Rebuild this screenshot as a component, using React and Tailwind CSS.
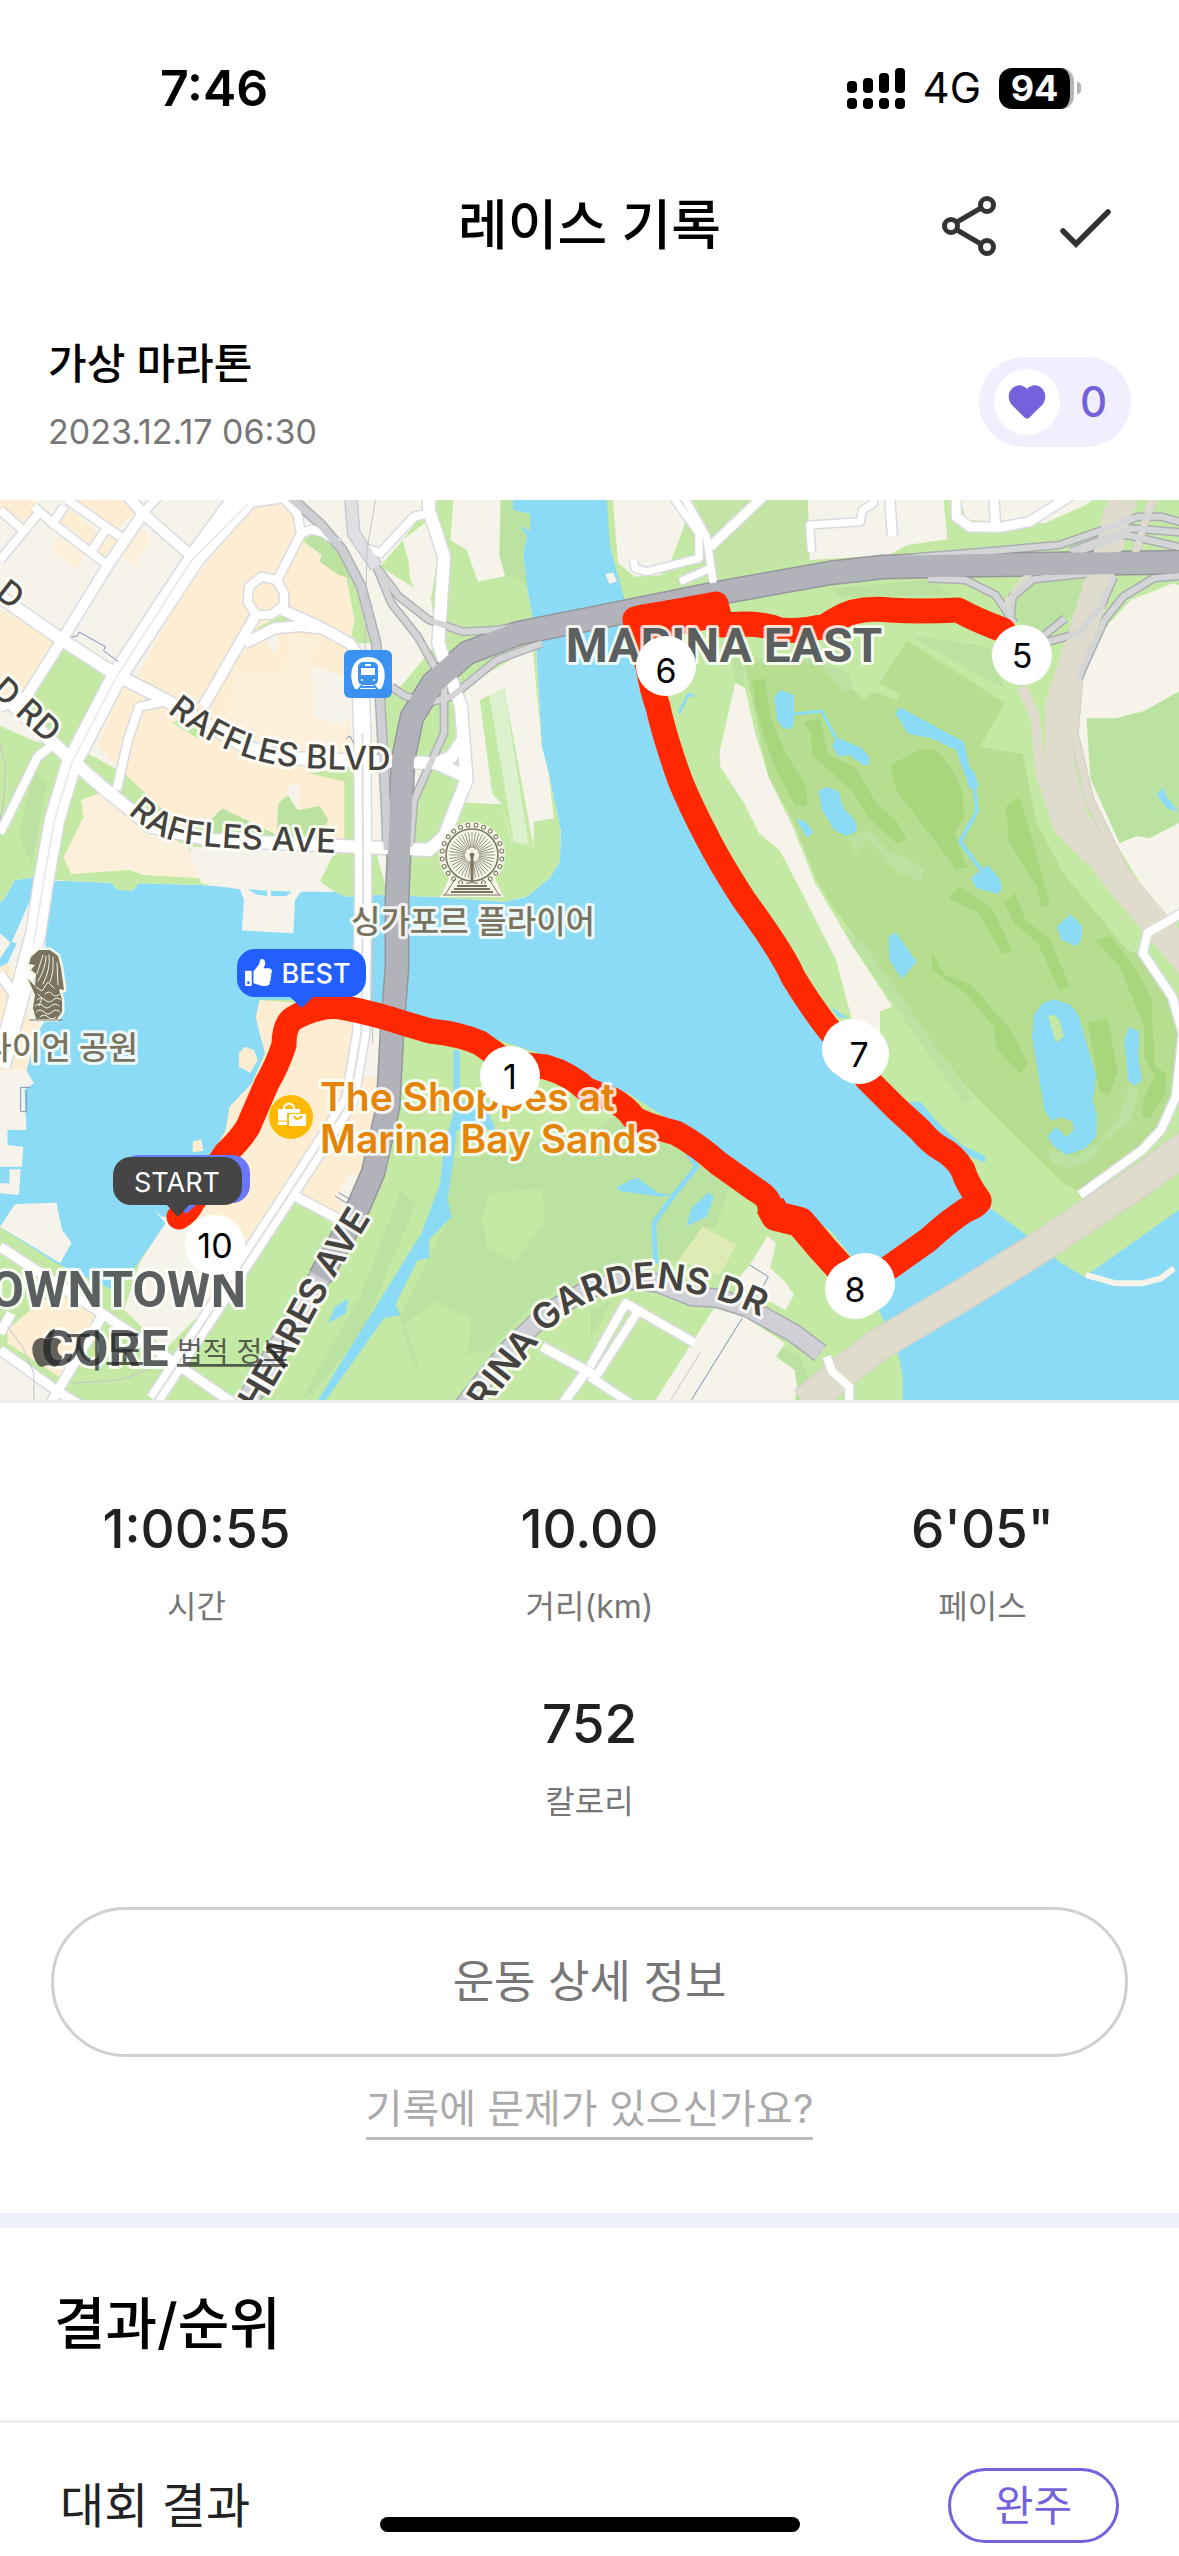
import { FaThumbsUp } from 'react-icons/fa';

const stats = [
  { value: '1:00:55', label: '시간' },
  { value: '10.00', label: '거리(km)' },
  { value: '6\'05"', label: '페이스' },
  { value: '752', label: '칼로리' },
];

// The map is split in four tiles, each with its own grid
const TILES = {
  nw: 'scale(.3763 .3333)',
  ne: 'translate(590 0) scale(.3756 .3333)',
  sw: 'translate(0 400) scale(.3763 .3333)',
  se: 'translate(590 400) scale(.3756 .3333)',
};

const WATER = '#8bdbf6';
const LAND = '#f6f4ea';
const GREEN = '#c4e9a5';
const PARK = '#bbe2a0';
const GOLF = '#b6dd90';
const ROUGH = '#a8d67d';
const BLOCK = '#fdeed3';
const SAND = '#e0dccd';

const areas = [
  // north west
  ['nw', LAND, 'M0-10H1362V30L1408 42V92L1380 75L1400 110L1390 160L1400 260L1415 350L1425 450L1440 740L1460 830L1490 990L1488 1085L1460 1135L1400 1190L1340 1205L1150 1190L1000 1185L920 1190L890 1175H800L784 1200L780 1300L643 1292L648 1200L638 1168L590 1160L535 1155L370 1150L350 1172L310 1168L296 1148L180 1143H140L85 1133L40 1140L10 1200L0 1205Z'],
  ['nw', GREEN, 'M1150 0H1362V30L1408 42V92L1380 75L1400 110L1390 160L1400 260L1415 350L1425 450L1440 740L1460 830L1490 990L1488 1085L1460 1135L1400 1190L1340 1205L1150 1190L1000 1185L920 1190L890 1175L850 1145L880 1075L915 1040H1020L1010 560L1050 580L1160 430L1145 295L1010 200L1070 120Z'],
  ['nw', PARK, 'M1330 0H1362V30L1408 42V92L1380 75L1400 110L1390 160L1400 260L1380 238L1342 228L1327 165Z'],
  ['nw', LAND, 'M1205 0H1330L1327 165L1342 228L1270 245L1240 150L1197 120Z'],
  ['nw', LAND, 'M1070 120L1140 60L1165 160L1145 298H1115L1090 240L1085 180Z'],
  ['nw', LAND, 'M1235 560L1415 440L1440 740L1458 820L1472 955L1418 965V1042L1360 1028L1333 913L1240 908Z'],
  ['nw', GREEN, 'M1275 600L1340 565L1418 1042L1362 1028L1333 913L1308 880Z'],
  ['nw', '#dcf2cf', 'M1300 585L1340 568L1405 1035L1365 1025Z'],
  ['nw', LAND, 'M1008 800H1050L1030 1180L1000 1060Z'],
  ['nw', LAND, 'M1090 800L1140 800L1100 900Z'],
  ['nw', GREEN, 'M168 440L305 525L205 770L120 740L60 605Z'],
  ['nw', GREEN, 'M0 678L95 725L200 740L330 820L440 900L500 960L560 1000V1155L370 1150L350 1172L310 1168L296 1148L180 1143L85 1133L40 1140L10 1200L0 1205Z'],
  ['nw', PARK, 'M90 810L125 850L85 1090L50 1010Z'],
  ['nw', '#fdf0da', 'M215 900L300 865L400 980L500 1040L535 1135L380 1125L345 1110L190 1122L168 1075L222 950Z'],
  ['nw', GREEN, 'M480 305L362 530L390 560L520 310Z'],
  ['nw', BLOCK, 'M690 0H745L780 40L800 120L850 160V185L920 230L942 360L930 430L915 560L940 800L915 840V1035L700 1000L590 925L500 1000L330 820L258 735L330 550L368 520L470 310L560 170L660 10Z'],
  ['nw', '#fdf0da', 'M765 410L850 415L830 495L835 650L920 670V800L760 780L640 740L600 650L625 510L755 518Z'],
  ['nw', GREEN, 'M800 120L850 80L920 140L990 430L930 430L942 360L920 230L850 185L855 165Z'],
  ['nw', PARK, 'M812 122L850 85L920 140L945 240L900 225L850 185L855 165Z'],
  ['nw', GREEN, 'M680 385L750 345L830 365L720 390Z'],
  ['nw', GREEN, 'M460 670L480 650L545 690L527 717Z'],
  ['nw', PARK, 'M560 960L590 925L700 985L735 1005L740 910L765 885L795 930L850 918L873 960L850 1010L870 1045L560 1040Z'],
  ['nw', GREEN, 'M820 820L940 800L945 1035H915V845Z'],
  ['nw', LAND, 'M830 495L920 530V678L835 650Z'],
  ['nw', LAND, 'M765 858L800 848L790 930L762 880Z'],
  ['nw', LAND, 'M705 418L735 400L742 430L728 462Z'],
  ['nw', LAND, 'M505 1040L890 1055L850 1140L870 1175L590 1160L535 1150L510 1080Z'],
  ['nw', WATER, 'M660 1168L710 1172V1188L680 1183ZM720 1172L775 1175L760 1188H720Z'],
  ['nw', BLOCK, 'M0 330L160 430L60 600L0 620Z'],
  ['nw', BLOCK, 'M0 0H90L100 40L50 90L0 40Z'],
  ['nw', BLOCK, 'M180 20L260 100L240 130L150 60ZM280 95L320 110L285 170L250 150ZM240 0H340L355 40L300 100L190 0Z'],
  ['nw', '#fdf0da', 'M375 85L402 110L360 200L325 170ZM150 110L225 160L205 208L135 150Z'],
  // north east, down to the bridge
  [null, GREEN, 'M607 0L610 47L626 105L639 187L652 220L676 280L710 350L752 425L774 462L800 500L834 550L875 600L913 640L939 660L966 690L981 700L990 708L1037 743L1060 762L1084 777L1179 710V0Z'],
  ['ne', LAND, 'M60-10H260L250 80L215 185L190 225L120 230L75 190Z'],
  ['ne', '#c3e4a5', 'M250 80L300-10H580L583 180L340 235L330 190Z'],
  ['ne', LAND, 'M580-10H940L952 118L845 135L795 165L585 180Z'],
  ['ne', LAND, 'M985-10H1350L1320 15L1210 70L1000 60Z'],
  ['ne', LAND, 'M41 222L62 218L72 244L52 252Z'],
  ['ne', PARK, 'M645 265L900 240L970 285L660 292Z'],
  ['ne', PARK, 'M1180 245L1330 225L1290 340L1210 405L1130 360L1125 290Z'],
  ['ne', PARK, 'M380 470L600 480L690 520L700 568L670 575L410 500V560L385 545Z'],
  ['ne', PARK, 'M850 405L1060 440L1100 560L1080 555Z'],
  ['ne', LAND, 'M1552 250L1600 270V1230L1520 1250L1400 1030L1310 850L1295 680L1310 550L1350 410L1440 300Z'],
  ['ne', PARK, 'M1322 655H1400L1475 633L1600 555V950L1490 1015L1455 1008L1410 1030L1332 835Z'],
  ['ne', GOLF, 'M410 490H610L670 575L700 568L730 600L755 575L815 600L825 585L770 548L845 422L1105 610L1038 742L1152 762L1190 970L1260 1120L1430 1350L1475 1370L1568 1550V1790L1520 1890L1300 2075L1250 2040L1160 1940L1000 1760L770 1410L640 1210L600 1130L540 960L475 830L440 640Z'],
  ['ne', PARK, 'M670 1290L730 1330L1020 1800L995 1812L800 1500Z'],
  ['ne', LAND, 'M387 548L413 565L440 700L475 830L540 980L600 1150L700 1340L805 1520L772 1535V1610L705 1590L655 1380L570 1190L505 1050L450 1000L410 910L347 800L345 755Z'],
  ['ne', ROUGH, 'M432 540L465 535L480 650L520 760L577 860V917H548L500 820L470 730L440 620Z'],
  ['ne', ROUGH, 'M570 668L612 655L635 765L705 800L765 915L815 960L842 1018L818 1032L740 950L700 875L592 765L588 700Z'],
  ['ne', ROUGH, 'M800 795L880 747L920 750L960 800L990 870L998 950L970 1000L1005 1103L975 1107L815 870Z'],
  ['ne', ROUGH, 'M1107 920L1143 892L1175 1010L1225 1215L1203 1220L1190 1160L1115 1025Z'],
  ['ne', ROUGH, 'M955 1195L985 1160L1070 1225L1125 1355L1100 1362L1030 1235Z'],
  ['ne', ROUGH, 'M1103 1210L1130 1178L1160 1260L1225 1320L1278 1460L1250 1470L1192 1330L1130 1270Z'],
  ['ne', ROUGH, 'M910 1355L945 1425L1015 1455L1120 1590L1165 1692L1145 1722L1083 1645L1075 1580L1000 1480L910 1410Z'],
  ['ne', ROUGH, 'M1347 1320L1385 1308L1450 1400L1495 1495L1503 1700L1533 1720V1780L1490 1855L1470 1850L1473 1800L1503 1730L1475 1665V1580L1410 1400Z'],
  ['ne', ROUGH, 'M1326 1567L1378 1553L1405 1720L1380 1785L1355 1775Z'],
  ['ne', PARK, 'M683 1010L745 990L800 1060L840 1068L890 1110L882 1143L820 1118L740 1015L708 1062Z'],
  ['ne', PARK, 'M1435 1755L1460 1770L1440 1865L1370 1920L1340 1975L1285 2005L1230 1990L1215 1945L1290 1970L1350 1930L1410 1850Z'],
  ['ne', WATER, 'M508 570L543 585V670L535 688L515 685L498 660L490 590Z'],
  ['ne', WATER, 'M655 712L725 745L745 775L742 795H728L690 765L660 768L645 738Z'],
  ['ne', WATER, 'M825 622L995 725L1010 800L1025 820L1035 860L1012 868L975 750L910 715L848 702L813 640Z'],
  ['ne', WATER, 'M1058 1095L1090 1135L1097 1165L1085 1182L1030 1165L1013 1135Z'],
  ['ne', WATER, 'M630 860L662 875L675 925L705 960L712 992L683 1008L652 992L618 930L608 872Z'],
  ['ne', WATER, 'M547 955L575 965L595 997L578 1013ZM1527 865L1535 890L1568 935L1535 925L1508 882Z'],
  ['ne', WATER, 'M1280 1243L1310 1280L1308 1320L1295 1338L1255 1320L1243 1280Z'],
  ['ne', WATER, 'M795 1310L813 1297L870 1385L830 1438L797 1380Z'],
  ['ne', WATER, 'M1235 1498L1280 1515L1300 1545L1348 1730L1338 1800L1350 1850L1348 1910L1320 1945L1270 1965L1235 1940L1218 1910L1240 1880L1268 1912L1288 1890L1285 1865L1255 1852L1228 1862L1210 1830L1177 1610L1182 1545L1205 1510Z'],
  ['ne', GREEN, 'M1220 1550L1235 1543L1250 1560L1262 1610L1240 1627Z'],
  ['ne', WATER, 'M1435 1582L1462 1595L1460 1680L1470 1740L1450 1758L1432 1740L1422 1620Z'],
  ['se', WATER, 'M850 605H880L920 660L990 735L1052 768V788L960 745L900 670ZM640 320L690 355L660 352Z'],
  // marina bay and the gardens
  [null, GREEN, 'M260 500L256 517L260 533L265 553L252 583L230 607L226 630L211 657L169 720L147 750L128 777L113 790L56 763L0 727V900H903V877L898 853L887 828L879 810L849 753L830 730L778 705L718 650L673 622L628 593L590 583L538 553L478 533L404 517L354 500Z'],
  ['sw', BLOCK, 'M690 300L1050 330L1040 600L980 850L920 1000L780 890L640 1130L450 960L560 770L600 690L610 620L670 550L705 460L690 400L680 350Z'],
  ['sw', BLOCK, 'M650 440L675 450L685 480L665 518L635 500V460ZM512 725L535 718L540 752L512 757Z'],
  ['sw', LAND, 'M980 360H1025L1015 530H960ZM930 820L960 830L920 920L895 890Z'],
  ['sw', LAND, 'M430 950L540 950L640 1110L500 1330L440 1350L330 1230L370 1090L410 1020L440 970L410 930Z'],
  ['sw', GREEN, 'M512 1265L580 1200L520 1340L440 1400L420 1370Z'],
  ['sw', PARK, 'M1200 780L1400 720L1568 690V1130L1430 1200L1300 1350L1100 1400L1060 1250L1140 1070L1195 950L1150 900Z'],
  ['sw', PARK, 'M1065 870L1105 915L960 1300L830 1480L800 1500L960 1180Z'],
  ['sw', GREEN, 'M1300 880L1440 865L1448 960L1370 1085L1295 1040L1280 950ZM1075 1270L1160 1205L1252 1255L1240 1400L1120 1420Z'],
  ['sw', WATER, 'M1205 450H1222V600L1300 640L1320 700L1280 680L1215 690L1190 900L1200 950L1140 1020V1075L1110 1080L1050 1215L1065 1245L1020 1255L860 1510L845 1500L960 1290L1120 1000L1170 850L1180 740L1205 640Z'],
  ['sw', WATER, 'M925 1197L920 1240L872 1270L890 1220Z'],
  ['se', PARK, 'M0 700L60 650L220 740L300 800L370 860L335 985L300 980L235 1080L170 1090L0 1130Z'],
  ['se', WATER, 'M73 860L125 832L180 878L215 885L190 890L75 872ZM315 877L330 890L310 950L258 978L270 925Z'],
  ['se', '#deebb6', 'M300 980L390 1035L345 1125L235 1080Z'],
  ['se', PARK, 'M505 1340L560 1370L600 1500H550L545 1410L495 1370ZM0 1230L60 1200L0 1320Z'],
  ['se', LAND, 'M330 1225L410 1250L520 1330L495 1370L545 1410L552 1470L545 1500H175Z'],
  ['se', LAND, 'M473 1008L495 1030L480 1105L520 1145L543 1185L520 1230L385 1150L425 1095Z'],
  // downtown
  ['sw', LAND, 'M0 100L30 130L80 0H125L120 90L125 350L100 400L70 510L90 550L65 570L70 690H20V735L62 740L58 800H0Z'],
  ['sw', LAND, 'M25 808H55L50 885L0 880V850H25ZM40 912L150 908L165 990L190 1028L160 1090L0 980Z'],
  ['sw', BLOCK, 'M0 150L50 240L60 330L100 380L70 510H0Z'],
  ['sw', BLOCK, 'M20 1290L110 1200L180 1190L270 1250L170 1440L20 1330Z'],
  ['sw', LAND, 'M0 1370L140 1480V1520H0Z'],
  ['sw', WATER, 'M0 200L20 190L45 130L30 125L0 175Z'],
];

// tile, fill, casing, width, path
const roads = [
  ['ne', SAND, SAND, 7, 'M1170 220L1100 330M1150 560L1185 650L1200 820L1250 990L1330 1080'],
  ['ne', SAND, SAND, 26, 'M1420-10L1340 300L1250 620V800L1290 960L1400 1130L1520 1290L1640 1450'],
  ['ne', SAND, '#d6d3c8', 7, 'M1500-10L1440 200M1300 540L1288 700L1330 900L1430 1130'],
  ['se', SAND, '#d6d3c8', 30, 'M1600 730L1480 830L1200 1040L1000 1180L760 1340L570 1510'],
  ['se', LAND, LAND, 3, 'M1320 1125L1400 1150H1470L1520 1135L1555 1105'],
  ['nw', '#fff', '#d9dbe0', 8, 'M110 30L0 180M0 30L60 90M90 20L140 70L280 190M180 0L320 110M170 20L140 70M280 90L240 160M420-10L370 50'],
  ['nw', '#fff', '#d9dbe0', 10, 'M340-10L380 40L510 170M380 40L290 190L165 420L70 590L0 620M620-10L510 160'],
  ['nw', '#fff', '#d9dbe0', 12, 'M0 290L165 420L310 525L440 600L650 740L780 775L1160 790L1240 830M1160 790L1200 770L1230 720'],
  ['nw', '#fff', '#d9dbe0', 12, 'M20 600L180 770L260 850L400 980L560 1020L1140 1050L1180 1010L1240 840L1225 620L1165 430L1180 170L1140 30V-10'],
  ['nw', '#fff', '#d9dbe0', 8, 'M440 605L370 620L340 720L310 870M180 770L140 735L100 770L0 1000'],
  ['nw', '#fff', '#d9dbe0', 8, 'M735 245L800 100L790 40L750-10M660 10L750-5M800 100L830 88L860 98L900 130M695 230L735 240L755 280V315L720 345H680L658 305L662 260ZM1140 40L1100 50L1010 160L970 145'],
  ['nw', '#fff', '#d9dbe0', 10, 'M680 345L540 620M750 330L840 375L930 430L955 470M650 430L730 385L800 378L850 385'],
  ['nw', '#fff', '#d9dbe0', 19, 'M680-30L520 170L310 530L190 790L145 960L115 1150L95 1300L60 1450L0 1700'],
  ['sw', '#fff', '#d9dbe0', 9, 'M0 220L40 290M0 1040L270 1240L440 1370L620 1510M270 1250L150 1480L130 1520M0 1350L160 1480L220 1520M0 1300L30 1240M770 880L920 970M1440 1340L1580 1425M1560 1410L1490 1520'],
  ['sw', '#fff', '#d9dbe0', 16, 'M955-740L963-500L965 0L960 400L930 600L770 880L410 1500'],
  ['se', '#fff', '#d9dbe0', 8, 'M0 1400L95 1210L280 1330M10 1440L130 1230M0 1430L120 1520M630 1370L645 1415L690 1460V1520'],
  ['se', '#fff', '#d9dbe0', 8, 'M1590 30L1485 98L1472 160L1550 290L1578 400L1560 590L1520 690L1470 750L1305 885'],
  ['ne', '#fff', '#d9dbe0', 7, 'M220-10L290 100V175L150 215L120 205L115 180M250-10L310 110L330 260M330 200L240 245M590 155L585 75L720 65L725 30L755 10V-5'],
  ['ne', '#fff', '#d9dbe0', 9, 'M470-20L320 140M798-10L805 110M975-10V50L1010 80L1090 82L1170 65L1290-20M1075-10L1080 75'],
  ['nw', '#d3d5d6', '#b0b3b4', 6, 'M1000 200L1060 290L1140 360L1230 395L1320 390L1440 365M1000 200L1040 310L1110 410L1180 550V700L1100 900L1090 1040M1040 560L1080 590L1150 605L1200 590L1320 480L1440 430'],
  ['nw', '#cdcfd3', '#b0b3b4', 8, 'M770-10L850 70L910 150L960 260L1000 430L1010 600L1025 900L1030 1050'],
  ['nw', '#dfe0e4', '#c9cacf', 11, 'M932-10L940 100L1000 200'],
  ['ne', '#d3d5d6', '#abaeaf', 6, 'M800 178L1000 160L1250 135L1390 80L1460 50H1520L1600 75M1280 155L1440 85L1600 100M1300 155L1430 105L1600 150M900 235L1000 240L1080 285L1130 370M1330 220L1180 238L1125 290L1120 350M1600 225L1500 235L1420 290L1370 360L1300 535M1395 230L1360 320L1300 400L1220 425M1265 355L1210 405'],
  ['sw', '#cfd0d5', '#a9abb0', 17, 'M1230 1520L1350 1350L1450 1240L1568 1165L1680 1140L1750 1150L1840 1190L1910 1195L1990 1225L2110 1300L2180 1360'],
  [null, '#b2b3ba', '#96979d', 22, 'M1190 62L984 65L883 67L830 73L718 93L590 119L519 133L467 153L433 183L412 217L403 260L397 400L397 467L392 533L388 607L373 673L354 717L320 777'],
  [null, '#cfd0d5', '#a9abb0', 20, 'M320 777L241 912'],
];

// Thin water channels, railways and lane marks
const lines = [
  ['ne', WATER, 3, 'M543 642L617 633L655 715M237 640L262 583L276 588'],
  ['ne', WATER, 4, 'M1023 860L1030 935L985 1025L1040 1108'],
  ['se', WATER, 5, 'M255 750L285 800L220 890L170 970L175 1090'],
  ['se', '#7d90bd', 1, 'M425 1095L475 1130L450 1180M405 1255L270 1500'],
  ['nw', '#7d90bd', 1, 'M190 412L205 408L210 396L280 440L275 452L315 485M920 715L930 708L940 730M915 755L925 765L935 750'],
  ['sw', '#7d90bd', 1, 'M80 562H55V635H70V570M900 878L933 900M890 888L925 912'],
  ['nw', '#c3c4c8', 1, 'M998 0L975 150L970 450M0 730L15 800L10 900L0 960'],
  ['sw', '#c3c4c8', 1, 'M20 1280L60 1340L90 1420V1500M190 1450L320 1440L440 1390M990 100V430'],
  ['se', '#c3c4c8', 1, 'M295 1355L215 1500'],
  ['nw', '#ececf0', 2, 'M660 10L510 180L310 530L190 790L145 960L115 1150L90 1330'],
  ['sw', '#dddee2', 2, 'M963-500L965 0L960 400L930 600L770 880L410 1500'],
];

const route =
  'M179 717Q188 712 192 703L226 653Q240 640 248 627L267 583Q277 566 284 545Q284 524 294 518Q304 512 320 508Q334 505 346 508Q376 514 403 523L430 531Q460 534 480 543L508 563L546 567Q570 574 587 590L613 600Q626 607 633 617Q642 624 676 633Q698 645 718 663L756 690Q770 698 770 708Q774 717 797 720Q810 730 819 743L842 767Q850 778 860 783L890 767L928 740Q950 720 966 710Q980 704 979 700Q966 682 963 670Q954 655 940 648Q930 642 920 630L896 608L868 580Q846 550 827 527Q810 505 793 477Q784 455 744 400Q722 366 710 343Q690 305 680 280Q664 235 658 207Q652 190 648 167L639 133L635 119L716 104L721 125L745 124Q765 124 780 130Q800 132 826 126Q840 116 853 112Q870 108 890 110Q920 112 958 110Q976 120 1003 130L1020 155';

const markers = [
  { x: 666, y: 166, label: '6', dy: 4 },
  { x: 1022, y: 155, label: '5', dy: 0 },
  { x: 510, y: 576, label: '1', dy: 0 },
  { x: 215, y: 745, label: '10', dy: 0 },
  { x: 859, y: 554, label: '7', dy: 0 },
  { x: 855, y: 789, label: '8', dy: 0 },
];

const spokes = Array.from({ length: 40 }, (_, i) => i * 9);
const cabins = Array.from({ length: 24 }, (_, i) => (i + 0.5) * 15);

const FerrisWheel = () => (
  <g transform="translate(472 355)" stroke="#7a735f" fill="none">
    <path d="M-27 39L-18 20H18L27 39Z" fill="#f4f6e8" stroke="#f4f6e8" strokeWidth="6" />
    <circle r="31" fill="#f4f6e8" stroke="#f4f6e8" strokeWidth="4" />
    {spokes.map((deg) => (
      <path key={deg} transform={`rotate(${deg})`} d="M0-7V-23" strokeWidth=".7" />
    ))}
    {cabins.map((deg) => (
      <circle key={deg} transform={`rotate(${deg})`} cy="-30" r="2" strokeWidth="1" />
    ))}
    <circle r="26" strokeWidth="1.5" />
    <circle r="2" fill="#7a735f" />
    <path d="M0 0V28" strokeWidth="3" />
    <path d="M-18 28L-13 29H13L18 28L24 39H-24Z" fill="#f4f6e8" stroke="none" />
    <path d="M-15 31H15M-18 34H18M-21 37H21" strokeWidth="2" />
    <path d="M-29 40H29M-17 24L-27 40M17 24L27 40" strokeWidth="1" />
  </g>
);

const Merlion = () => (
  <g strokeLinejoin="round" strokeLinecap="round">
    <path
      d="M31 457L39 450L50 450L58 456L61 468L64 490L59 489L62 500V512L57 519H36L33 508L35 495L28 479L35 486L36 474L31 470L35 465L29 464Z"
      fill="#7a735f"
      stroke="#f4f6e8"
      strokeWidth="5"
    />
    <path
      d="M31 457L39 450L50 450L58 456L61 468L64 490L59 489L62 500V512L57 519H36L33 508L35 495L28 479L35 486L36 474L31 470L35 465L29 464Z"
      fill="#7a735f"
    />
    <path
      d="M43 455L37 474M46 456Q46 468 38 481M49 455Q51 468 43 484M53 457Q54 472 50 482M57 463L58 485M36 487L42 491L48 482L54 488"
      fill="none"
      stroke="#f4f6e8"
      strokeWidth="1"
    />
    <path
      d="M45 494Q49 490 52 494T60 494M37 500Q41 496 45 500T53 500T61 500M35 506Q39 502 43 506T51 506T59 506M36 512Q40 508 44 512T52 512T60 512M40 517Q44 513 48 517T56 517M38 494L42 498L39 506"
      fill="none"
      stroke="#f4f6e8"
      strokeWidth="1"
    />
    <path d="M30 520H62" stroke="#7a735f" strokeWidth="1" />
  </g>
);

const TrainStop = () => (
  <g>
    <rect x="344" y="150" width="48" height="48" rx="6" fill="#3c92f2" />
    <path d="M355 189C348 178 350 157 368 157S388 178 381 189Z" fill="#fff" />
    <rect x="358" y="162" width="20" height="23" rx="5" fill="#3c92f2" />
    <path d="M365 164h6v2h-6ZM361 168h14v7h-14Z" fill="#fff" />
    <circle cx="362" cy="180" r="1" fill="#fff" />
    <circle cx="374" cy="180" r="1" fill="#fff" />
    <path d="M362 185L358 190M374 185L378 190M361 187H375" stroke="#3c92f2" strokeWidth="2" />
  </g>
);

const ShopIcon = () => (
  <g>
    <circle cx="291" cy="617" r="22" fill="#ffb900" />
    <path d="M278 609H300V613H287V625H278Z" fill="#fff" />
    <path d="M284 609V607Q289 600 294 607V609" fill="none" stroke="#fff" strokeWidth="2" />
    <rect x="289" y="614" width="17" height="12" rx="1" fill="#fff" />
    <path d="M294 616Q297 622 302 616" fill="none" stroke="#ffb900" strokeWidth="2" />
    <path d="M278 621H287" stroke="#ffb900" strokeWidth="1" />
  </g>
);

const AppleLogo = () => (
  <path
    transform="translate(32 826) scale(.08 .085)"
    d="M318.7 268.7c-.2-36.7 16.4-64.4 50-84.8-18.8-26.9-47.2-41.7-84.7-44.6-35.5-2.8-74.3 20.7-88.5 20.7-15 0-49.4-19.7-76.4-19.7C63.3 141.2 4 184.8 4 273.5q0 39.3 14.4 81.2c12.8 36.7 59 126.7 107.2 125.2 25.2-.6 43-17.9 75.8-17.9 31.8 0 48.3 17.9 76.4 17.9 48.6-.7 90.4-82.5 102.6-119.3-65.2-30.7-61.7-90-61.7-91.9zm-56.6-164.2c27.3-32.4 24.8-61.9 24-72.5-24.1 1.4-52 16.4-67.9 34.9-17.5 19.8-27.8 44.3-25.6 71.9 26.1 2 49.9-11.4 69.5-34.3z"
  />
);

const RaceMap = () => (
  <svg viewBox="0 0 1179 900" className="block w-full overflow-hidden bg-[#8bdbf6]" role="img" aria-label="코스 지도">
    {areas.map(([tile, fill, d]) => (
      <path key={d} transform={TILES[tile]} fill={fill} d={d} />
    ))}
    <g fill="none" strokeLinejoin="round" className="[&_path]:[vector-effect:non-scaling-stroke]">
      {roads.map(([tile, , casing, width, d]) => (
        <path key={d} transform={TILES[tile]} stroke={casing} strokeWidth={width + 3} d={d} />
      ))}
      {roads.map(([tile, color, , width, d]) => (
        <path key={d} transform={TILES[tile]} stroke={color} strokeWidth={width} d={d} />
      ))}
      {lines.map(([tile, color, width, d]) => (
        <path key={d} transform={TILES[tile]} stroke={color} strokeWidth={width} d={d} />
      ))}
    </g>

    {/* Recorded course */}
    <circle cx="177" cy="718" r="10" fill="#0a84ff" />
    <path d={route} fill="none" stroke="#ff2800" strokeWidth="25" strokeLinejoin="round" strokeLinecap="round" />
    <path d="M640 118L714 106L718 114L650 128Z" fill="#ff2800" stroke="#ff2800" strokeWidth="26" strokeLinejoin="round" />
    <path d="M770 705L776 716L800 722L822 748L842 770" fill="none" stroke="#ff2800" strokeWidth="30" strokeLinejoin="round" />

    {/* Street and place names */}
    <defs>
      <path id="blvd" d="M167 212C200 238 230 254 263 262S340 270 420 270" />
      <path id="ave" d="M128 313C150 334 170 342 195 345S290 352 370 354" />
      <path id="sheares" d="M220 980L260 910L301 840L335 777L371 718" />
      <path id="gardens" d="M440 985L493 900L538 843Q560 815 590 802T654 788Q710 792 761 817" />
    </defs>
    <g
      className="font-['Inter','Noto_Sans_CJK_KR',sans-serif]"
      fill="#45433f"
      stroke="#fffffb"
      strokeOpacity=".85"
      strokeWidth="6"
      strokeLinejoin="round"
      paintOrder="stroke"
      fontSize="33"
      fontWeight="500"
    >
      <text><textPath href="#blvd">RAFFLES BLVD</textPath></text>
      <text><textPath href="#ave">RAFFLES AVE</textPath></text>
      <g fontSize="36" fontWeight="600">
        <text textAnchor="end"><textPath href="#sheares" startOffset="100%">SHEARES AVE</textPath></text>
        <text textAnchor="end"><textPath href="#gardens" startOffset="100%">MARINA GARDENS DR</textPath></text>
      </g>
      <text transform="translate(-6 96) rotate(38)">D</text>
      <text transform="translate(-10 192) rotate(42)">D RD</text>
      <g className="font-['Roboto',sans-serif]" fontWeight="700" fill="#5b5f60">
        <text x="724" y="162" textAnchor="middle" fontSize="48">MARINA EAST</text>
        <g fontSize="50">
          <text x="246" y="807" textAnchor="end">DOWNTOWN</text>
          <text x="105" y="866" textAnchor="middle">CORE</text>
        </g>
      </g>
      <g fontSize="32" fill="#7a735f">
        <text x="473" y="433" textAnchor="middle">싱가포르 플라이어</text>
        <text x="138" y="559" textAnchor="end">머라이언 공원</text>
      </g>
      <g fontSize="39" fontWeight="600" fill="#e58508">
        <text x="320" y="611">The Shoppes at</text>
        <text x="320" y="653">Marina Bay Sands</text>
      </g>
    </g>
    <FerrisWheel />
    <Merlion />
    <TrainStop />
    <ShopIcon />

    <g className="font-['Inter','Noto_Sans_CJK_KR',sans-serif]" fill="#222" opacity=".7">
      <AppleLogo />
      <text x="64" y="867" fontSize="44">지도</text>
      <text x="177" y="862" fontSize="28" textDecoration="underline">법적 정보</text>
    </g>

    {/* Kilometre marks */}
    <circle cx="852" cy="549" r="30" fill="#fff" />
    <circle cx="865" cy="783" r="30" fill="#fff" />
    <g className="font-['Inter',sans-serif]" fontSize="34" textAnchor="middle">
      {markers.map(({ x, y, label, dy }) => (
        <g key={label}>
          <circle cx={x} cy={y} r="30" fill="#fff" />
          <text x={x} y={y + dy + 13}>{label}</text>
        </g>
      ))}
    </g>

    {/* Start and best pins */}
    <g className="font-['Inter',sans-serif]" fontSize="27" fill="#fff">
      <rect x="121" y="655" width="129" height="48" rx="18" fill="#6a78f8" />
      <path d="M175 700H202L186 714Z" fill="#6a78f8" />
      <rect x="113" y="657" width="129" height="48" rx="18" fill="#454545" />
      <path d="M166 704H190L178 717Z" fill="#454545" />
      <text x="177" y="692" textAnchor="middle">START</text>
      <rect x="237" y="449" width="129" height="48" rx="18" fill="#235fff" />
      <path d="M289 496H314L302 508Z" fill="#235fff" />
      <FaThumbsUp x="245" y="459" width="28" height="26" color="#fff" />
      <text x="316" y="483" textAnchor="middle" fontWeight="500">BEST</text>
    </g>
  </svg>
);

const StatusBar = () => (
  <div className="flex h-44 items-center justify-between pr-[98px] pl-40">
    <span className="text-[50px] leading-none font-semibold">7:46</span>
    <div className="flex items-center">
      <svg viewBox="0 0 58 41" className="h-[41px] w-[58px]" aria-hidden="true">
        <rect x="0" y="13" width="10" height="12" rx="4" />
        <rect x="16" y="10" width="10" height="15" rx="4" />
        <rect x="32" y="5" width="10" height="20" rx="4" />
        <rect x="48" y="0" width="10" height="25" rx="4" />
        <rect x="0" y="30" width="10" height="11" rx="4" />
        <rect x="16" y="30" width="10" height="11" rx="4" />
        <rect x="32" y="30" width="10" height="11" rx="4" />
        <rect x="48" y="30" width="10" height="11" rx="4" />
      </svg>
      <span className="mx-[18px] text-[42px] leading-none">4G</span>
      <div className="flex h-[41px] w-[75px] items-center justify-center overflow-hidden rounded-[13px] border-r-4 border-[#b5b5b5] bg-black text-[36px] leading-none font-bold text-white">
        94
      </div>
      <div className="ml-[3px] h-3 w-1 rounded-r-full bg-[#b5b5b5]" />
    </div>
  </div>
);

const App = () => {
  return (
    <main className="min-h-screen bg-white font-['Inter','Noto_Sans_CJK_KR',sans-serif] text-black">
      <StatusBar />

      <header className="grid h-[100px] grid-cols-[1fr_auto_1fr] items-center">
        <h1 className="col-start-2 text-[54px] leading-none font-medium">레이스 기록</h1>
        <div className="flex items-center justify-end gap-16 pr-[68px]">
          <button type="button" aria-label="공유">
            <svg viewBox="0 0 54 60" className="h-[60px] w-[54px]" fill="none" stroke="#333" strokeWidth="5">
              <circle cx="9" cy="30" r="6.5" />
              <circle cx="45" cy="9" r="6.5" />
              <circle cx="45" cy="51" r="6.5" />
              <path d="M15 26L39 12M15 34L39 48" />
            </svg>
          </button>
          <button type="button" aria-label="확인">
            <svg viewBox="0 0 51 60" className="h-[60px] w-[51px]" fill="none" stroke="#333" strokeWidth="5.5" strokeLinecap="round">
              <path d="M3 35L16 48L48 16" />
            </svg>
          </button>
        </div>
      </header>

      <section className="flex items-center justify-between px-12 pt-[58px] pb-[30px]">
        <div>
          <h2 className="text-[42px] leading-[60px] font-medium">가상 마라톤</h2>
          <p className="text-[34px] leading-[76px] text-[#777]">2023.12.17 06:30</p>
        </div>
        <button type="button" className="flex h-[90px] items-center rounded-full bg-[#f1eefd] pr-6 pl-[15px] text-[#7461db]">
          <span className="flex size-[66px] items-center justify-center rounded-full bg-white">
            <svg viewBox="0 0 38 34" className="h-[34px] w-[38px]" fill="currentColor" aria-hidden="true">
              <path d="M16 32L3 19C-5 6 10-6 19 4C28-6 43 6 35 19L22 32Q19 35 16 32Z" />
            </svg>
          </span>
          <span className="ml-5 text-[42px] leading-none font-medium">0</span>
        </button>
      </section>

      <section className="border-b-3 border-[#eee]">
        <RaceMap />
      </section>

      <dl className="flex flex-wrap justify-center gap-y-[39px] pt-[88px]">
        {stats.map(({ value, label }) => (
          <div key={label} className="flex w-1/3 flex-col-reverse text-center">
            <dt className="text-[32px] leading-[80px] text-[#777]">{label}</dt>
            <dd className="text-[53px] leading-[76px] font-medium text-[#202122]">{value}</dd>
          </div>
        ))}
      </dl>

      <div className="flex flex-col items-center px-[51px] pt-[65px] pb-[73px]">
        <button type="button" className="h-[150px] w-full rounded-full border-3 border-[#d0d0d0] text-[45px] text-[#777]">
          운동 상세 정보
        </button>
        <a href="#report" className="mt-[23px] border-b-3 border-[#bbb] text-[40px] leading-[57px] text-[#aaa]">
          기록에 문제가 있으신가요?
        </a>
      </div>

      <section className="border-t-[15px] border-[#ecf0f9]">
        <h2 className="border-b-3 border-[#ebeff5] px-[54px] text-[56px] leading-[192px] font-medium">결과/순위</h2>
        <div className="flex items-center justify-between pt-[45px] pr-[60px] pb-[13px] pl-[60px]">
          <span className="text-[48px] leading-[75px] text-[#222]">대회 결과</span>
          <span className="flex h-[75px] w-[171px] items-center justify-center rounded-full border-3 border-[#7461db] text-[42px] text-[#7461db]">
            완주
          </span>
        </div>
      </section>

      <div className="fixed bottom-6 left-1/2 h-[15px] w-[420px] -translate-x-1/2 rounded-full bg-black" />
    </main>
  );
};

export default App;
